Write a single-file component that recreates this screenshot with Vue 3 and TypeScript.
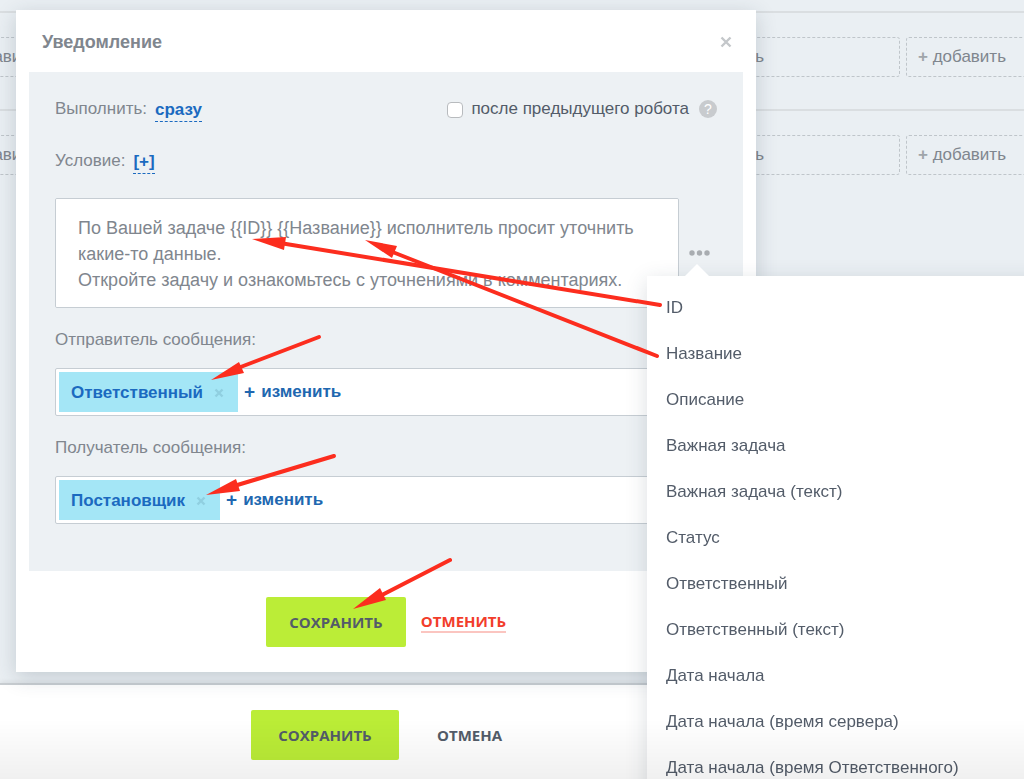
<script setup lang="ts">
import { ref } from 'vue'

const boardRows = [1, 2]
const boardCells = [1, 2, 3, 4, 5]

const message = ref(
  'По Вашей задаче {{ID}} {{Название}} исполнитель просит уточнить какие-то данные.\n' +
    'Откройте задачу и ознакомьтесь с уточнениями в комментариях.',
)
const afterPrevious = ref(false)

const people = [
  { id: 'sender', label: 'Отправитель сообщения:', value: 'Ответственный' },
  { id: 'recipient', label: 'Получатель сообщения:', value: 'Постановщик' },
]

const menu: string[] = [
  'ID',
  'Название',
  'Описание',
  'Важная задача',
  'Важная задача (текст)',
  'Статус',
  'Ответственный',
  'Ответственный (текст)',
  'Дата начала',
  'Дата начала (время сервера)',
  'Дата начала (время Ответственного)',
]

const arrows = [
  { line: 'M660 305L280 243', head: '252,239 286,237 284,250' },
  { line: 'M657 356L390 251', head: '365,240 397,246 392,258' },
  { line: 'M319 337L238 368', head: '211,380 239,362 244,373' },
  { line: 'M334 456L234 486', head: '206,495 236,479 240,491' },
  { line: 'M450 560L380 596', head: '353,609 380,588 386,600' },
]
</script>

<template>
  <div class="page">
    <main class="board">
      <section v-for="row in boardRows" :key="row" class="board-row">
        <button v-for="cell in boardCells" :key="cell" type="button" class="add">
          <b>+</b> добавить
        </button>
      </section>
    </main>

    <footer class="page-footer">
      <button type="button" class="save wide">СОХРАНИТЬ</button>
      <button type="button" class="plain">ОТМЕНА</button>
    </footer>

    <div class="dialog" role="dialog" aria-labelledby="dialog-title">
      <header class="dialog-header">
        <h1 id="dialog-title">Уведомление</h1>
        <button type="button" class="close" aria-label="Закрыть">
          <svg width="12" height="12" viewBox="0 0 12 12"><path d="M1.5 1.5L10.5 10.5M10.5 1.5L1.5 10.5" /></svg>
        </button>
      </header>

      <div class="panel">
        <div class="line">
          <span class="caption">Выполнить:</span>
          <a href="#" class="dashed">сразу</a>
          <label class="check">
            <input v-model="afterPrevious" type="checkbox" />
            после предыдущего робота
          </label>
          <span class="help">?</span>
        </div>
        <div class="line">
          <span class="caption">Условие:</span>
          <a href="#" class="dashed">[+]</a>
        </div>

        <div class="message">
          <textarea v-model="message" aria-label="Текст сообщения"></textarea>
          <div class="more">
            <button type="button" class="dots" aria-label="Вставить значение">
              <svg width="21" height="6" viewBox="0 0 21 6">
                <circle cx="3" cy="3" r="2.7" />
                <circle cx="10.5" cy="3" r="2.7" />
                <circle cx="18" cy="3" r="2.7" />
              </svg>
            </button>
            <ul class="menu">
              <li v-for="item in menu" :key="item">
                <a href="#">{{ item }}</a>
              </li>
            </ul>
          </div>
        </div>

        <div v-for="person in people" :key="person.id" class="field">
          <span :id="person.id" class="caption">{{ person.label }}</span>
          <div class="picker" role="group" :aria-labelledby="person.id">
            <span class="chip">
              {{ person.value }}
              <button type="button" class="remove" aria-label="Удалить">
                <svg width="10" height="10" viewBox="0 0 10 10"><path d="M1.5 1.5L8.5 8.5M8.5 1.5L1.5 8.5" /></svg>
              </button>
            </span>
            <a href="#" class="change"><span>+</span>изменить</a>
          </div>
        </div>
      </div>

      <div class="dialog-footer">
        <button type="button" class="save">СОХРАНИТЬ</button>
        <a href="#" class="cancel">ОТМЕНИТЬ</a>
      </div>
    </div>

    <div class="shade"></div>

    <svg class="arrows" width="700" height="640" viewBox="0 0 700 640" aria-hidden="true">
      <g v-for="arrow in arrows" :key="arrow.line">
        <path :d="arrow.line" />
        <polygon :points="arrow.head" />
      </g>
    </svg>
  </div>
</template>

<style>
body {
  margin: 0;
}
</style>

<style scoped>
.page {
  position: relative;
  display: flex;
  flex-direction: column;
  height: 100vh;
  overflow: hidden;
  background: #eaeff3;
  color: #535c69;
  font-family: 'Liberation Sans', Arial, sans-serif;
  font-size: 17px;
  line-height: 20px;
}

.page * {
  box-sizing: border-box;
}

button {
  margin: 0;
  padding: 0;
  border: 0;
  background: none;
  color: inherit;
  font: inherit;
  cursor: pointer;
}

a {
  text-decoration: none;
}

.board {
  flex: 1;
  padding-top: 11px;
}

.board-row {
  display: flex;
  gap: 6px;
  height: 98px;
  margin-left: -62px;
  padding-top: 24px;
  border-top: 2px solid #dadee1;
}

.add {
  flex: none;
  width: 236px;
  height: 40px;
  padding-left: 11px;
  border: 1px dashed #bfc5ca;
  border-radius: 3px;
  color: #80868e;
  text-align: left;
}

.add b {
  color: #a0a5aa;
}

.page-footer {
  display: flex;
  gap: 38px;
  align-items: flex-start;
  height: 96px;
  padding: 25px 0 0 251px;
  border-top: 2px solid #c8cdd1;
  background: #fff;
  box-shadow: 0 -2px 4px rgba(0, 0, 0, 0.06);
}

.save,
.plain,
.cancel {
  font-family: 'Open Sans', sans-serif;
  font-size: 15px;
  font-weight: 700;
}

.save {
  width: 140px;
  height: 50px;
  border-radius: 2px;
  background: #bbed37;
}

.save.wide {
  width: 148px;
}

.plain {
  height: 50px;
}

.dialog {
  position: absolute;
  top: 10px;
  right: 268px;
  left: 16px;
  background: #fff;
  box-shadow: 0 5px 20px rgba(40, 60, 75, 0.2);
}

.dialog-header {
  display: flex;
  align-items: center;
  justify-content: space-between;
  height: 62px;
  padding: 2px 24px 0 26px;
}

h1 {
  margin: 0;
  color: #80868e;
  font-size: 18px;
}

.close {
  display: flex;
}

.close path {
  fill: none;
  stroke: #c4c7ca;
  stroke-width: 2.4;
}

.panel {
  margin: 0 13px;
  padding: 25px 26px 47px;
  background: #edf1f4;
}

.line {
  display: flex;
  align-items: center;
  height: 24px;
  margin-bottom: 28px;
}

.caption {
  color: #80868e;
}

.dashed {
  margin: 2px 0 0 8px;
  border-bottom: 1px dashed #1b6ac0;
  color: #1b6ac0;
  font-weight: 700;
  line-height: 22px;
}

.check {
  display: flex;
  align-items: center;
  margin-left: auto;
}

.check input {
  appearance: none;
  width: 16px;
  height: 16px;
  margin: 2px 8px 0 0;
  border: 1px solid #b8bbbe;
  border-radius: 4px;
  background: #fff;
}

.help {
  width: 18px;
  height: 18px;
  margin-left: 10px;
  border-radius: 50%;
  background: #c8cbce;
  color: #fff;
  font-size: 14px;
  line-height: 18px;
  text-align: center;
}

.message {
  display: flex;
  align-items: center;
  gap: 10px;
  margin-top: -3px;
}

textarea {
  flex: 1;
  height: 110px;
  padding: 16px 22px;
  border: 1px solid #c6cdd3;
  border-radius: 2px;
  outline: 0;
  background: #fff;
  color: #80868e;
  font: 18px/26px 'Liberation Sans', Arial, sans-serif;
  resize: none;
}

.more {
  position: relative;
  width: 28px;
}

.dots {
  display: flex;
}

.dots circle {
  fill: #a9adb1;
}

.menu {
  position: absolute;
  z-index: 1;
  top: 26px;
  left: -42px;
  width: 400px;
  margin: 0;
  padding: 9px 0 9px 19px;
  background: #fff;
  box-shadow: 0 5px 20px rgba(40, 60, 75, 0.17);
  list-style: none;
}

.menu::before {
  position: absolute;
  top: -12px;
  left: 38px;
  border: 12px solid transparent;
  border-top: 0;
  border-bottom-color: #fff;
  content: '';
}

.menu a {
  display: block;
  color: #535c69;
  line-height: 46px;
}

.field {
  padding-top: 22px;
}

.picker {
  display: flex;
  align-items: center;
  height: 48px;
  margin: 18px 38px 0 0;
  padding: 3px;
  border: 1px solid #c6cdd3;
  border-radius: 2px;
  background: #fff;
}

.chip {
  display: flex;
  align-items: center;
  gap: 11px;
  height: 40px;
  padding: 2px 14px 0 12px;
  background: #a4e6f6;
  color: #1b6ac0;
  font-weight: 700;
}

.remove {
  display: flex;
}

.remove path {
  fill: none;
  stroke: #90cfe0;
  stroke-width: 2.4;
}

.change {
  display: flex;
  gap: 6px;
  margin-left: 6px;
  color: #2067b0;
  font-weight: 700;
}

.change span {
  font-size: 19px;
}

.dialog-footer {
  display: flex;
  align-items: center;
  justify-content: center;
  gap: 15px;
  padding: 26px 0 25px;
}

.cancel {
  border-bottom: 2px solid #fbc5c0;
  color: #f23d2b;
}

.shade {
  position: absolute;
  z-index: 2;
  right: 0;
  bottom: 0;
  left: 0;
  height: 60px;
  background: linear-gradient(transparent, rgba(0, 0, 0, 0.06));
  pointer-events: none;
}

.arrows {
  position: absolute;
  z-index: 2;
  top: 0;
  left: 0;
  pointer-events: none;
}

.arrows path {
  fill: none;
  stroke: #fc2d1e;
  stroke-linecap: round;
  stroke-width: 4;
}

.arrows polygon {
  fill: #fc2d1e;
}
</style>
